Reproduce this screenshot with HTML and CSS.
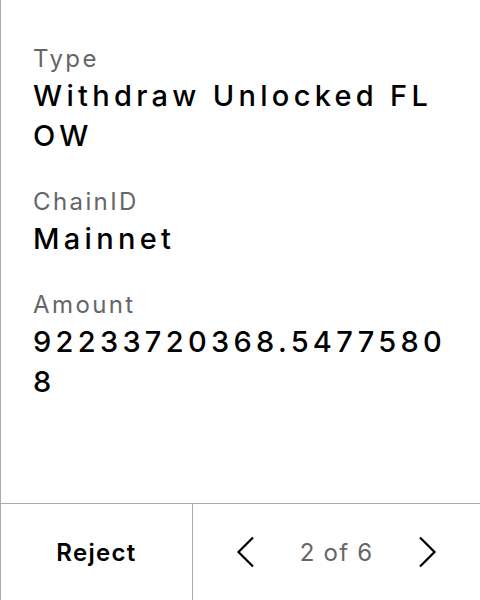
FILE: index.html
```html
<!DOCTYPE html>
<html lang="en">
<head>
<meta charset="utf-8">
<title>Transaction</title>
<link rel="stylesheet" href="styles.css">
</head>
<body>
<div class="screen">
  <main class="details">
    <div class="field">
      <div class="label">Type</div>
      <div class="value">Withdraw Unlocked FLOW</div>
    </div>
    <div class="field">
      <div class="label">ChainID</div>
      <div class="value">Mainnet</div>
    </div>
    <div class="field">
      <div class="label">Amount</div>
      <div class="value">92233720368.54775808</div>
    </div>
  </main>
  <footer class="footer">
    <button class="reject">Reject</button>
    <div class="pager">
      <button class="nav" aria-label="Previous">
        <svg width="18" height="32" viewBox="0 0 18 32"><path d="M17 1.5 L2.5 16 L17 30.5" fill="none" stroke="#000" stroke-width="2.2"/></svg>
      </button>
      <span class="count">2 of 6</span>
      <button class="nav" aria-label="Next">
        <svg width="18" height="32" viewBox="0 0 18 32"><path d="M1 1.5 L15.5 16 L1 30.5" fill="none" stroke="#000" stroke-width="2.2"/></svg>
      </button>
    </div>
  </footer>
</div>
</body>
</html>
```

FILE: styles.css
```css
* { box-sizing: border-box; }
html, body { margin: 0; padding: 0; background: #fff; }
body { font-family: Inter, "Noto Sans", sans-serif; color: #000; }
.screen {
  height: 600px;
  border-left: 1px solid #aaa;
  display: flex;
  flex-direction: column;
}
.details {
  flex: 1;
  padding: 42px 30px 0 32px;
  display: flex;
  flex-direction: column;
  gap: 29px;
}
.label {
  font-size: 24px;
  line-height: 34px;
  letter-spacing: 2.4px;
  color: #666;
}
.value {
  font-size: 29px;
  font-weight: 500;
  line-height: 40px;
  letter-spacing: 4.3px;
  color: #000;
  word-break: break-all;
}
.footer {
  height: 97px;
  border-top: 1px solid #aaa;
  display: flex;
}
.reject {
  width: 192px;
  border: none;
  border-right: 1px solid #aaa;
  background: none;
  font-family: inherit;
  font-size: 24px;
  font-weight: 600;
  letter-spacing: 1.3px;
  color: #000;
  padding: 0;
}
.pager {
  flex: 1;
  display: flex;
  align-items: center;
  justify-content: center;
  gap: 46px;
}
.nav {
  border: none;
  background: none;
  padding: 0;
  display: flex;
}
.count {
  font-size: 24px;
  letter-spacing: 1.2px;
  color: #666;
}
```
